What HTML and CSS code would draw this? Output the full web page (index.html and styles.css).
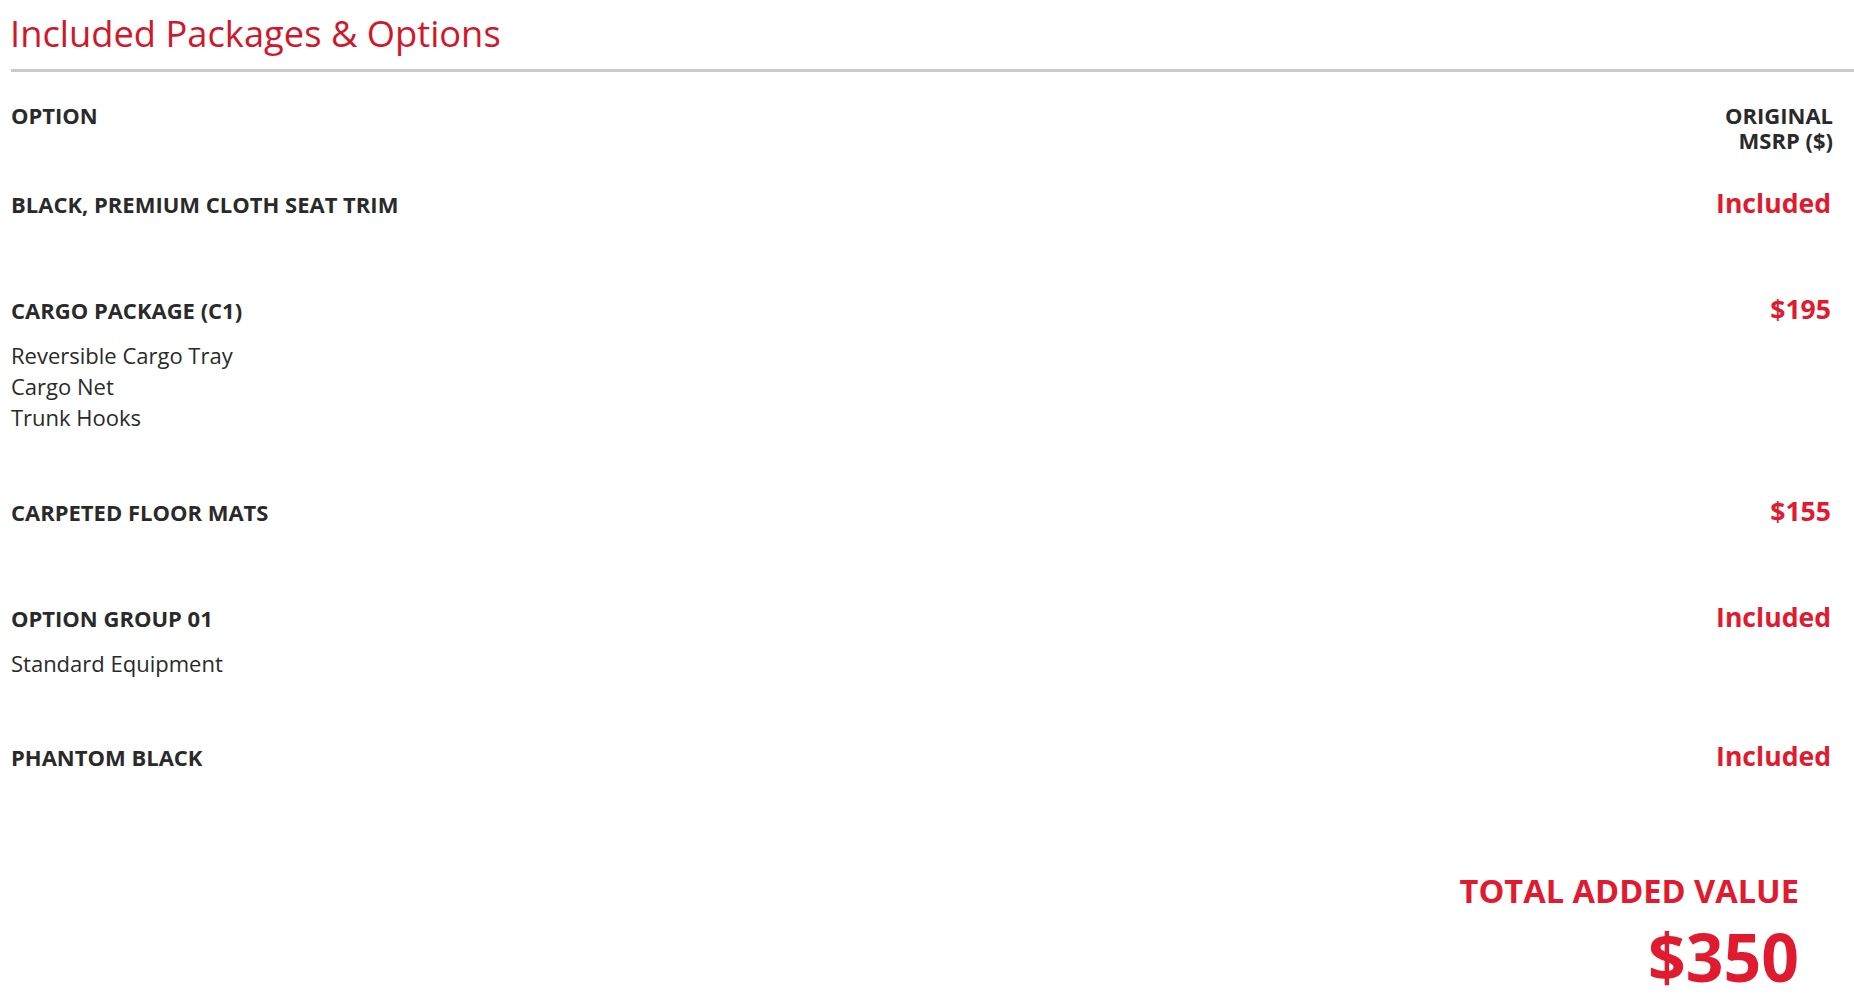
FILE: index.html
```html
<!DOCTYPE html>
<html lang="en">
<head>
<meta charset="utf-8">
<title>Included Packages &amp; Options</title>
<link rel="stylesheet" href="styles.css">
</head>
<body>
<main class="page">
  <h1 class="title">Included Packages &amp; Options</h1>
  <hr class="rule">
  <section class="table">
    <div class="head">
      <div class="head-option">OPTION</div>
      <div class="head-msrp">ORIGINAL<br>MSRP ($)</div>
    </div>

    <div class="row row--plain">
      <div class="row-main">
        <div class="row-label">BLACK, PREMIUM CLOTH SEAT TRIM</div>
      </div>
      <div class="row-price">Included</div>
    </div>

    <div class="row">
      <div class="row-main">
        <div class="row-label">CARGO PACKAGE (C1)</div>
        <ul class="row-details">
          <li>Reversible Cargo Tray</li>
          <li>Cargo Net</li>
          <li>Trunk Hooks</li>
        </ul>
      </div>
      <div class="row-price">$195</div>
    </div>

    <div class="row row--plain">
      <div class="row-main">
        <div class="row-label">CARPETED FLOOR MATS</div>
      </div>
      <div class="row-price">$155</div>
    </div>

    <div class="row">
      <div class="row-main">
        <div class="row-label">OPTION GROUP 01</div>
        <ul class="row-details">
          <li>Standard Equipment</li>
        </ul>
      </div>
      <div class="row-price">Included</div>
    </div>

    <div class="row row--plain">
      <div class="row-main">
        <div class="row-label">PHANTOM BLACK</div>
      </div>
      <div class="row-price">Included</div>
    </div>

    <div class="total">
      <div class="total-label">TOTAL ADDED VALUE</div>
      <div class="total-value">$350</div>
    </div>
  </section>
</main>
</body>
</html>
```

FILE: styles.css
```css
* { box-sizing: border-box; }

html, body {
  margin: 0;
  padding: 0;
  background: #ffffff;
}

body {
  font-family: "Open Sans", "Liberation Sans", sans-serif;
  color: #2a2a2a;
}

.page {
  padding: 11px 0 0 11px;
}

.title {
  margin: 0 0 14px -1px;
  font-size: 36.3px;
  line-height: 44px;
  font-weight: 400;
  color: #d3172b;
}

.rule {
  margin: 0;
  border: 0;
  height: 3px;
  background: #cbcbcb;
}

.table {
  padding-right: 21px;
}

.head {
  display: flex;
  justify-content: space-between;
  align-items: flex-start;
  padding-top: 31px;
  font-size: 22px;
  line-height: 25px;
  font-weight: 700;
  color: #2a2a2a;
}

.head-msrp {
  text-align: right;
}

.head + .row {
  margin-top: 35px;
}

.row {
  display: flex;
  justify-content: space-between;
  align-items: baseline;
  padding-bottom: 62px;
}

.row--plain {
  padding-bottom: 75px;
}

.row-label {
  font-size: 22px;
  line-height: 30px;
  font-weight: 700;
  color: #2a2a2a;
}

.row-details {
  list-style: none;
  margin: 15px 0 0;
  padding: 0;
  font-size: 22px;
  line-height: 31.2px;
  font-weight: 400;
  color: #2a2a2a;
}

.row-price {
  font-size: 26.6px;
  line-height: 30px;
  font-weight: 700;
  color: #e01b2f;
  margin-right: 2px;
}

.total {
  display: flex;
  flex-direction: column;
  align-items: flex-end;
  padding-top: 24px;
  padding-right: 34px;
  color: #e01b2f;
  font-weight: 700;
}

.total-label {
  font-size: 32.6px;
  line-height: 40px;
}

.total-value {
  margin-top: 10px;
  font-size: 66px;
  line-height: 70px;
}
```
